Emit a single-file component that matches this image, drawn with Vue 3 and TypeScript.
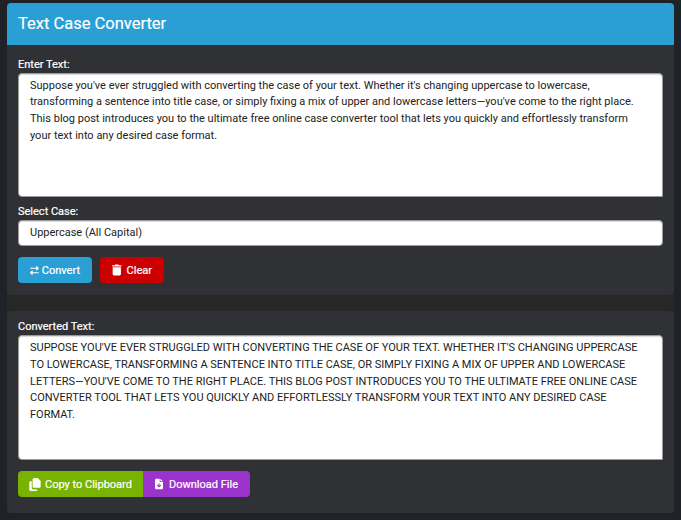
<script setup lang="ts">
import { ref } from 'vue'

const input = ref("Suppose you've ever struggled with converting the case of your text. Whether it's changing uppercase to lowercase, transforming a sentence into title case, or simply fixing a mix of upper and lowercase letters—you've come to the right place. This blog post introduces you to the ultimate free online case converter tool that lets you quickly and effortlessly transform your text into any desired case format.")
const output = ref(input.value.toUpperCase())
const mode = ref('upper')
</script>

<template>
  <main class="page">
    <div class="wrap">
      <header class="head">Text Case Converter</header>
      <section class="card first">
        <label class="lbl" for="src">Enter Text:</label>
        <textarea id="src" v-model="input" class="box tall"></textarea>
        <label class="lbl sel-lbl" for="mode">Select Case:</label>
        <select id="mode" v-model="mode" class="box pick">
          <option value="upper">Uppercase (All Capital)</option>
        </select>
        <div class="btns">
          <button class="btn blue">
            <svg viewBox="0 0 512 512" width="11" height="11"><path fill="currentColor" d="M32 96h320V32c0-13 8-25 20-30s26-2 35 7l96 96c6 6 9 14 9 23s-3 17-9 23l-96 96c-9 9-23 12-35 7s-20-17-20-30v-64H32c-18 0-32-14-32-32s14-32 32-32zm448 256c18 0 32 14 32 32s-14 32-32 32H160v64c0 13-8 25-20 30s-26 2-35-7L9 407c-6-6-9-14-9-23s3-17 9-23l96-96c9-9 23-12 35-7s20 17 20 30v64z"/></svg>
            Convert
          </button>
          <button class="btn red">
            <svg viewBox="0 0 448 512" width="10.5" height="12"><path fill="currentColor" d="M135 18C140 7 151 0 163 0h122c12 0 23 7 28 18l8 14h95c18 0 32 14 32 32s-14 32-32 32H32C14 96 0 82 0 64s14-32 32-32h96zM32 128h384v320c0 35-29 64-64 64H96c-35 0-64-29-64-64z"/></svg>
            Clear
          </button>
        </div>
      </section>
      <section class="card second">
        <label class="lbl" for="dst">Converted Text:</label>
        <textarea id="dst" v-model="output" class="box tall" readonly></textarea>
        <div class="btns joined">
          <button class="btn green">
            <svg viewBox="0 0 448 512" width="12" height="13"><path fill="currentColor" d="M192 0h124c8 0 17 3 23 9l100 100c6 6 9 15 9 23v188c0 35-29 64-64 64H192c-35 0-64-29-64-64V64c0-35 29-64 64-64zM64 128h32v256c0 35 29 64 64 64h160v16c0 26-22 48-48 48H64c-35 0-64-29-64-64V176c0-26 22-48 48-48z"/></svg>
            Copy to Clipboard
          </button>
          <button class="btn purple">
            <svg viewBox="0 0 384 512" width="9" height="12"><path fill="currentColor" fill-rule="evenodd" d="M64 0h160v128c0 18 14 32 32 32h128v288c0 35-29 64-64 64H64c-35 0-64-29-64-64V64C0 29 29 0 64 0zm192 0 128 128H256zM216 232c0-13-11-24-24-24s-24 11-24 24v102l-31-31c-9-9-25-9-34 0s-9 25 0 34l72 72c9 9 25 9 34 0l72-72c9-9 9-25 0-34s-25-9-34 0l-31 31z"/></svg>
            Download File
          </button>
        </div>
      </section>
    </div>
  </main>
</template>

<style scoped>
.page {
  width: 681px;
  height: 520px;
  box-sizing: border-box;
  padding: 3px 7px 0;
  background: #1f2227;
  overflow: hidden;
  font-family: Roboto, "Liberation Sans", sans-serif;
}
.wrap {
  width: 667px;
  height: 510px;
  background: #272727;
  border-radius: 4px;
}
.head {
  height: 42px;
  box-sizing: border-box;
  padding: 0 11px;
  line-height: 42px;
  font-size: 16.5px;
  font-weight: 400;
  -webkit-text-stroke: 0.15px #fff;
  color: #fff;
  background: #2a9fd6;
  border-radius: 4px 4px 0 0;
}
.card {
  display: flex;
  flex-direction: column;
  align-items: flex-start;
  box-sizing: border-box;
  padding: 12px 11px;
  background: #303134;
}
.first { height: 250px; border-radius: 0 0 4px 4px; }
.second {
  height: 202px;
  margin-top: 16px;
  padding-top: 8px;
  border-radius: 4px;
}
.lbl {
  font-size: 11px;
  line-height: 15px;
  font-weight: 400;
  -webkit-text-stroke: 0.2px #fff;
  color: #fff;
  margin-bottom: 1px;
}
.sel-lbl { margin-top: 7px; }
.box {
  width: 645px;
  box-sizing: border-box;
  border: 1px solid #9a9a9a;
  border-radius: 4px;
  background: #fff;
  color: #222;
  font-family: inherit;
  font-size: 11px;
  line-height: 16.8px;
  outline: none;
  box-shadow: inset 0 1px 1px rgba(0, 0, 0, 0.15);
}
.tall {
  height: 125px;
  padding: 3.5px 11px;
  resize: none;
  overflow: hidden;
  border-bottom-right-radius: 1px;
}
.second .tall { padding-top: 4px; }
.pick {
  height: 26px;
  padding: 1px 11px 0;
  appearance: none;
}
.btns {
  display: flex;
  gap: 8px;
  margin-top: 11px;
}
.joined { gap: 0; }
.btn {
  display: inline-flex;
  align-items: center;
  gap: 3px;
  height: 26px;
  padding: 0 11px;
  border: 1px solid transparent;
  border-radius: 4px;
  color: #fff;
  font-family: inherit;
  font-size: 11px;
  font-weight: 400;
  -webkit-text-stroke: 0.2px #fff;
  white-space: nowrap;
}
.blue { background: #2a9fd6; width: 74px; }
.red { background: #cc0000; gap: 5px; width: 64px; }
.green { background: #77b300; border-radius: 4px 0 0 4px; gap: 4px; padding: 0 10px; width: 125px; }
.purple { background: #9933cc; border-radius: 0 4px 4px 0; gap: 6px; width: 107px; }
</style>

<style>
html, body { background: #1f2227; }
</style>
